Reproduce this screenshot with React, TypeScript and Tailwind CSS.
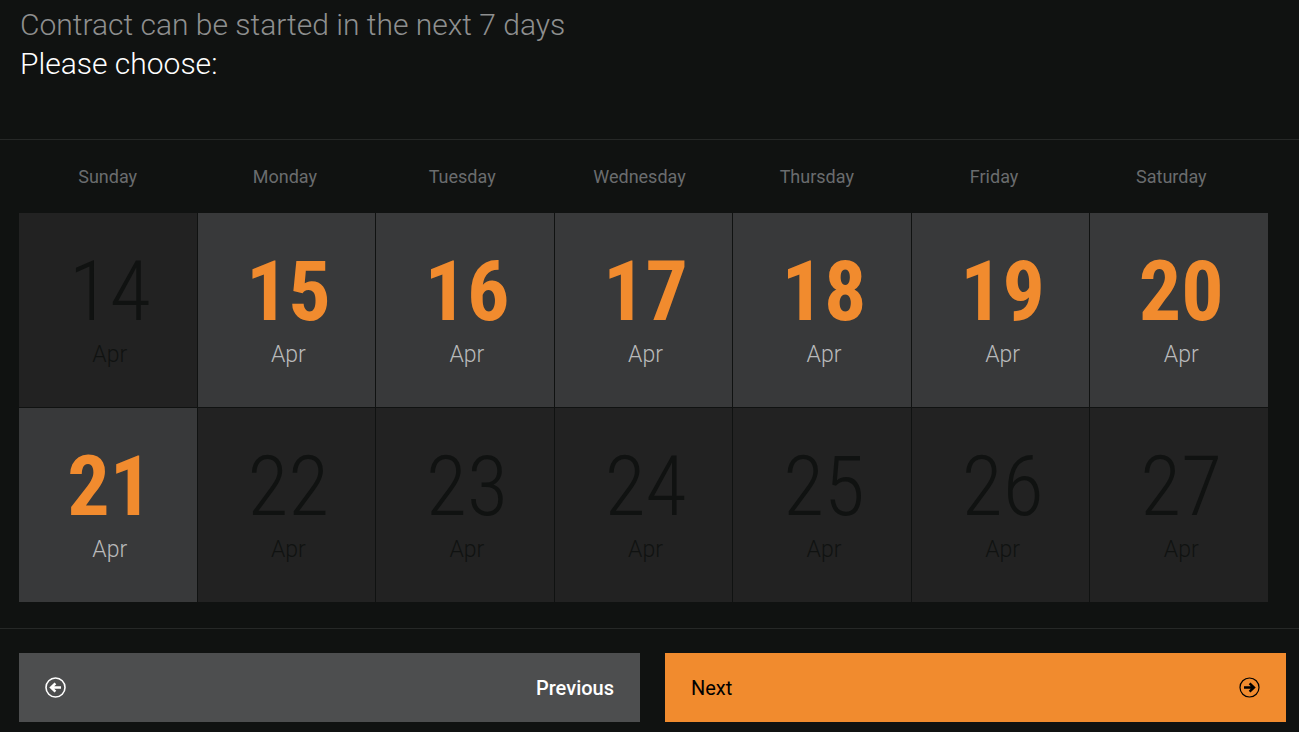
import { useState } from 'react';
import clsx from 'clsx';

interface Day {
  date: number;
  month: string;
  available: boolean;
}

const WEEKDAYS = ['Sunday', 'Monday', 'Tuesday', 'Wednesday', 'Thursday', 'Friday', 'Saturday'];

const DAYS: Day[] = Array.from({ length: 14 }, (_, i) => ({
  date: 14 + i,
  month: 'Apr',
  available: i > 0 && i < 8,
}));

function ArrowCircle({ direction, strokeWidth }: { direction: 'left' | 'right'; strokeWidth: number }) {
  return (
    <svg
      width="21"
      height="21"
      viewBox="0 0 21 21"
      fill="none"
      stroke="currentColor"
      aria-hidden="true"
      className={clsx('shrink-0', direction === 'left' && 'rotate-180')}
    >
      <circle cx="10.5" cy="10.5" r="9.5" strokeWidth={strokeWidth} />
      <path d="M5 10.5h9.5M10.6 6.4l4.3 4.1-4.3 4.1" strokeWidth="2.5" />
    </svg>
  );
}

function DayCell({ day, onSelect }: { day: Day; onSelect: (date: number) => void }) {
  return (
    <button
      type="button"
      disabled={!day.available}
      onClick={() => onSelect(day.date)}
      className={clsx(
        'flex h-[194px] flex-col items-center pt-[30px] pl-1',
        day.available ? 'bg-[#38393a]' : 'bg-[#222222]'
      )}
    >
      <span
        className={clsx(
          "font-['Roboto_Condensed','Liberation_Sans_Narrow',sans-serif] text-[84px] leading-[98px]",
          day.available ? 'font-bold text-[#f18b2e]' : 'font-light text-[#101211]'
        )}
      >
        {day.date}
      </span>
      <span
        className={clsx(
          'text-[23px] leading-[27px] font-light',
          day.available ? 'text-[#b9babb]' : 'text-[#101211]'
        )}
      >
        {day.month}
      </span>
    </button>
  );
}

export default function App() {
  const [, setSelected] = useState<number | null>(null);

  return (
    <main className="min-h-screen bg-[#101211] font-['Roboto',sans-serif]">
      {/* Heading */}
      <header className="h-[140px] border-b border-[#262827] px-5 pt-[5px]">
        <h1 className="text-3xl leading-[39px] font-light">
          <span className="block leading-[39px] text-[#8e8f8f]">Contract can be started in the next 7 days</span>
          <span className="block leading-[39px] text-white">Please choose:</span>
        </h1>
      </header>

      {/* Calendar */}
      <section className="border-b border-[#262827] pt-[25px] pr-[31px] pb-[26px] pl-[19px]">
        <div className="mr-2 grid grid-cols-7 pb-6 text-center text-lg leading-6 text-[#6a6c6e]">
          {WEEKDAYS.map((name) => (
            <span key={name}>{name}</span>
          ))}
        </div>
        <div className="grid grid-cols-7 gap-px">
          {DAYS.map((day) => (
            <DayCell key={day.date} day={day} onSelect={setSelected} />
          ))}
        </div>
      </section>

      {/* Navigation */}
      <nav className="grid grid-cols-2 gap-[25px] pt-6 pr-[13px] pb-[10px] pl-[19px] text-xl">
        <button
          type="button"
          className="flex h-[69px] items-center justify-between bg-[#4d4e4f] px-[26px] font-medium text-white"
        >
          <ArrowCircle direction="left" strokeWidth={1.6} />
          Previous
        </button>
        <button
          type="button"
          className="flex h-[69px] items-center justify-between bg-[#f18b2e] px-[26px] text-black"
        >
          Next
          <ArrowCircle direction="right" strokeWidth={1.2} />
        </button>
      </nav>
    </main>
  );
}
